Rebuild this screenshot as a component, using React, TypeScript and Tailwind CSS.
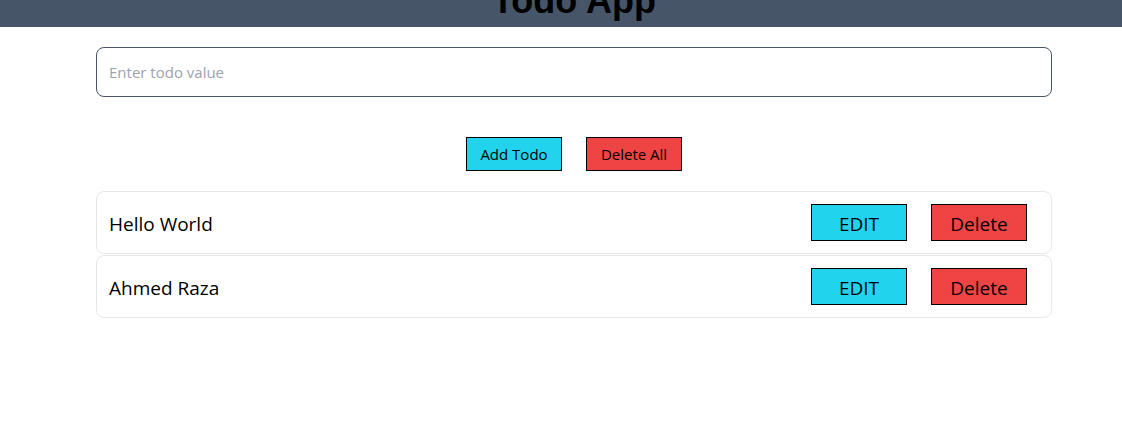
import { useState } from 'react'

type Todo = { id: number; text: string }

export default function App() {
  const [value, setValue] = useState('')
  const [todos, setTodos] = useState<Todo[]>([
    { id: 1, text: 'Hello World' },
    { id: 2, text: 'Ahmed Raza' },
  ])

  const addTodo = () => {
    if (!value.trim()) return
    setTodos([...todos, { id: Date.now(), text: value }])
    setValue('')
  }

  return (
    <div className="min-h-[422px] bg-white font-['Open_Sans',sans-serif] text-black">
      <header className="h-[27px] overflow-hidden bg-[#475569]">
        <h1 className="ml-[96px] mt-[-17px] w-[956px] text-center font-['Liberation_Sans',sans-serif] text-4xl font-bold leading-none">
          Todo App
        </h1>
      </header>

      <main className="ml-[96px] w-[956px] pt-5">
        <input
          type="text"
          value={value}
          onChange={(e) => setValue(e.target.value)}
          placeholder="Enter todo value"
          className="h-[50px] w-full rounded-lg border border-[#475569] px-3 text-[15px] outline-none placeholder:text-[#9ca3af]"
        />

        <div className="mt-10 flex justify-center gap-6">
          <button
            onClick={addTodo}
            className="h-[34px] w-24 border border-black bg-[#22d3ee] text-[15px]"
          >
            Add Todo
          </button>
          <button
            onClick={() => setTodos([])}
            className="h-[34px] w-24 border border-black bg-[#ef4444] text-[15px]"
          >
            Delete All
          </button>
        </div>

        <ul className="mt-5 flex flex-col gap-px">
          {todos.map((todo) => (
            <li
              key={todo.id}
              className="flex items-center justify-between rounded-lg border border-[#e5e7eb] py-3 pl-3 pr-6"
            >
              <span className="pt-[3px] text-[19px]">{todo.text}</span>
              <div className="flex gap-6">
                <button className="h-[37px] w-24 border border-black bg-[#22d3ee] pt-[3px] text-[19px]">
                  EDIT
                </button>
                <button
                  onClick={() => setTodos(todos.filter((t) => t.id !== todo.id))}
                  className="h-[37px] w-24 border border-black bg-[#ef4444] pt-[3px] text-[19px]"
                >
                  Delete
                </button>
              </div>
            </li>
          ))}
        </ul>
      </main>
    </div>
  )
}
